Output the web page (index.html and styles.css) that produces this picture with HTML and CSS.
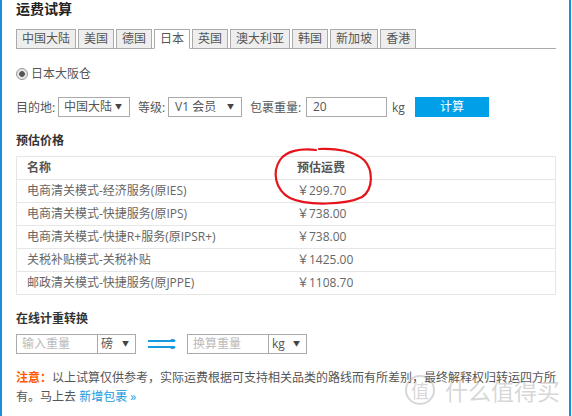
FILE: index.html
```html
<!DOCTYPE html>
<html lang="zh-CN">
<head>
<meta charset="utf-8">
<title>运费试算</title>
<link rel="stylesheet" href="styles.css">
</head>
<body>
<div class="frame">
  <h1 class="title">运费试算</h1>
  <div class="tabs">
    <span class="tab">中国大陆</span>
    <span class="tab">美国</span>
    <span class="tab">德国</span>
    <span class="tab active">日本</span>
    <span class="tab">英国</span>
    <span class="tab">澳大利亚</span>
    <span class="tab">韩国</span>
    <span class="tab">新加坡</span>
    <span class="tab">香港</span>
  </div>
  <div class="radio-row"><span class="radio"></span><span>日本大阪仓</span></div>
  <div class="form-row">
    <span class="lbl lbl-dest">目的地:</span>
    <div class="select sel-dest"><span>中国大陆</span><span class="caret">▼</span></div>
    <span class="lbl lbl-level">等级:</span>
    <div class="select sel-level"><span>V1 会员</span><span class="caret">▼</span></div>
    <span class="lbl lbl-weight">包裹重量:</span>
    <div class="input inp-weight">20</div>
    <span class="unit">kg</span>
    <button class="btn">计算</button>
  </div>
  <h2 class="sub">预估价格</h2>
  <div class="tbl">
    <div class="tr th"><div>名称</div><div>预估运费</div></div>
    <div class="tr"><div>电商清关模式-经济服务(原IES)</div><div>￥299.70</div></div>
    <div class="tr"><div>电商清关模式-快捷服务(原IPS)</div><div>￥738.00</div></div>
    <div class="tr"><div>电商清关模式-快捷R+服务(原IPSR+)</div><div>￥738.00</div></div>
    <div class="tr"><div>关税补贴模式-关税补贴</div><div>￥1425.00</div></div>
    <div class="tr"><div>邮政清关模式-快捷服务(原JPPE)</div><div>￥1108.70</div></div>
  </div>
  <h2 class="sub sub2">在线计重转换</h2>
  <div class="conv-row">
    <div class="group">
      <div class="g-input">输入重量</div>
      <div class="g-sel"><span>磅</span><span class="caret">▼</span></div>
    </div>
    <svg class="arrow" width="30" height="10" viewBox="0 0 30 10">
      <path d="M0 2 H27 L23 0" fill="none" stroke="#1a9be0" stroke-width="2"/>
      <path d="M0 8 H27 L23 10" fill="none" stroke="#1a9be0" stroke-width="2"/>
    </svg>
    <div class="group">
      <div class="g-input">换算重量</div>
      <div class="g-sel"><span>kg</span><span class="caret">▼</span></div>
    </div>
  </div>
  <p class="note"><span class="warn">注意：</span>以上试算仅供参考，实际运费根据可支持相关品类的路线而有所差别，最终解释权归转运四方所有。马上去 <a class="link" href="#">新增包裹 »</a></p>

  <svg class="mark" width="572" height="416" viewBox="0 0 572 416">
    <path d="M316 150 C300 148 286 151 280 160 C272 172 275 190 290 198 C306 206 346 205 362 197 C374 189 373 169 364 160 C354 151 336 148 319 149" fill="none" stroke="#e5141c" stroke-width="2.2" stroke-linecap="round"/>
  </svg>
  <div class="watermark"><span class="wm-logo">值</span><span class="wm-text">什么值得买</span></div>
</div>
</body>
</html>
```

FILE: styles.css
```css
* { box-sizing: border-box; }
html, body { margin: 0; padding: 0; background: #fff; }
body {
  font-family: "Open Sans", "Noto Sans CJK SC", sans-serif;
  font-size: 12px;
  color: #555;
}
.frame {
  position: relative;
  width: 571px;
  height: 416px;
  border-left: 2px solid #1591dc;
  border-right: 2px solid #1591dc;
  padding: 0 13px 0 14px;
  overflow: hidden;
}
.title {
  margin: 0;
  font-size: 14px;
  line-height: 18px;
  font-weight: bold;
  color: #222;
}
.tabs {
  display: flex;
  gap: 2px;
  margin-top: 11px;
  height: 20px;
  border-bottom: 1px solid #aaa;
}
.tab {
  height: 20px;
  line-height: 18px;
  padding: 0 5px;
  border: 1px solid #aaa;
  background: #eee;
  color: #555;
}
.tab.active {
  background: #fff;
  border-bottom-color: #fff;
}
.radio-row {
  display: flex;
  align-items: center;
  gap: 3px;
  margin-top: 17px;
  height: 16px;
  line-height: 16px;
}
.radio {
  width: 12px;
  height: 12px;
  border-radius: 50%;
  border: 1px solid #999;
  background: radial-gradient(circle, #555 0 2.5px, #e6e6e6 3.2px);
}
.form-row {
  display: flex;
  align-items: center;
  margin-top: 15px;
  height: 20px;
}
.lbl { white-space: nowrap; }
.lbl-dest { width: 42px; }
.lbl-level { width: 30px; }
.lbl-weight { width: 56px; }
.select, .input {
  height: 20px;
  border: 1px solid #aaa;
  line-height: 18px;
}
.select {
  display: flex;
  justify-content: space-between;
  align-items: center;
  padding: 0 7px 0 5px;
  margin-right: 8px;
}
.caret { font-size: 7px; color: #444; line-height: 18px; }
.sel-dest { width: 72px; }
.sel-level { width: 74px; padding-left: 6px; }
.input { padding-left: 6px; }
.inp-weight { width: 81px; }
.unit { margin-left: 5px; width: 14px; }
.btn {
  margin-left: 9px;
  width: 74px;
  height: 20px;
  border: 0;
  padding: 0;
  background: #00a0e9;
  color: #fff;
  font-family: inherit;
  font-size: 12px;
  line-height: 20px;
}
.sub {
  margin: 16px 0 0;
  font-size: 12px;
  line-height: 16px;
  font-weight: bold;
  color: #333;
}
.tbl {
  margin-top: 7px;
  border: 1px solid #e6e6e6;
}
.tr {
  display: grid;
  grid-template-columns: 270px 1fr;
  height: 23px;
  line-height: 22px;
  border-top: 1px solid #e6e6e6;
  color: #666;
}
.tr:first-child { border-top: 0; height: 22px; }
.tr > div { padding-left: 10px; white-space: nowrap; }
.th { font-weight: bold; color: #555; }
.sub2 { margin-top: 16px; }
.conv-row {
  display: flex;
  align-items: center;
  margin-top: 7px;
  height: 20px;
}
.group {
  display: flex;
  height: 20px;
  border: 1px solid #aaa;
  line-height: 18px;
}
.g-input {
  width: 81px;
  padding-left: 5px;
  border-right: 1px solid #aaa;
  color: #bbb;
}
.g-sel {
  width: 37px;
  display: flex;
  justify-content: space-between;
  padding: 0 6px 0 3px;
}
.arrow { margin: 0 9px 0 12px; }
.note {
  margin: 14px -10px 0 0;
  line-height: 19px;
  color: #555;
}
.warn { color: #ff5a00; font-weight: bold; }
.link { color: #1a9be0; text-decoration: none; }
.mark {
  position: absolute;
  left: -2px;
  top: 0;
  pointer-events: none;
}
.watermark {
  position: absolute;
  left: 403px;
  top: 375px;
  display: flex;
  align-items: center;
  gap: 10px;
  color: rgba(175,175,175,0.5);
  pointer-events: none;
}
.wm-logo {
  width: 30px;
  height: 30px;
  border-radius: 50%;
  border: 2px solid rgba(175,175,175,0.5);
  text-align: center;
  font-family: "Noto Sans CJK SC", sans-serif;
  font-size: 18px;
  line-height: 26px;
}
.wm-text {
  font-family: "Noto Sans CJK SC", sans-serif;
  font-size: 23px;
  line-height: 30px;
}
```
